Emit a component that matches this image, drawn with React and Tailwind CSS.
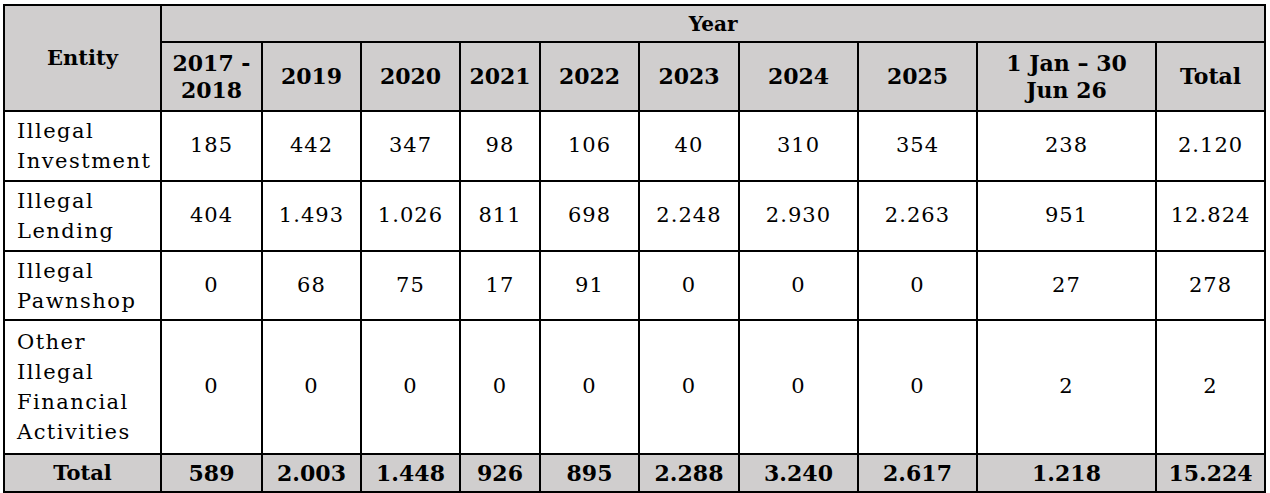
import React from "react";

const cols = [157, 101, 99, 99, 80, 99, 100, 119, 119, 179, 109];

const years = [
  ["2017 -", "2018"],
  ["2019"],
  ["2020"],
  ["2021"],
  ["2022"],
  ["2023"],
  ["2024"],
  ["2025"],
  ["1 Jan – 30", "Jun 26"],
  ["Total"],
];

const rows = [
  { name: ["Illegal", "Investment"], h: "h-[70px]", values: ["185", "442", "347", "98", "106", "40", "310", "354", "238", "2.120"] },
  { name: ["Illegal", "Lending"], h: "h-[70px]", values: ["404", "1.493", "1.026", "811", "698", "2.248", "2.930", "2.263", "951", "12.824"] },
  { name: ["Illegal", "Pawnshop"], h: "h-[69px]", values: ["0", "68", "75", "17", "91", "0", "0", "0", "27", "278"] },
  { name: ["Other", "Illegal", "Financial", "Activities"], h: "h-[134px]", values: ["0", "0", "0", "0", "0", "0", "0", "0", "2", "2"] },
];

const totals = ["589", "2.003", "1.448", "926", "895", "2.288", "3.240", "2.617", "1.218", "15.224"];

const cell = "border-2 border-black p-0";

export default function App() {
  return (
    <div className="w-[1270px] h-[493px] bg-white pt-[4px] pl-[3px] overflow-hidden" style={{ fontFamily: '"DejaVu Serif", "Liberation Serif", serif' }}>
      <table className="table-fixed border-collapse border-2 border-black text-black" style={{ width: 1263 }}>
        <colgroup>
          {cols.map((w, i) => (
            <col key={i} style={{ width: w }} />
          ))}
        </colgroup>
        <thead>
          <tr className="h-[37px] bg-[#d0cece]">
            <th rowSpan={2} className={`${cell} text-[21px] font-bold text-center align-middle`}>
              Entity
            </th>
            <th colSpan={10} className={`${cell} text-[20px] font-bold text-center`}>
              Year
            </th>
          </tr>
          <tr className="h-[69px] bg-[#d0cece]">
            {years.map((y, i) => (
              <th key={i} className={`${cell} text-[22px] font-bold text-center leading-[27px] ${i === 9 ? "text-[21px]" : ""}`}>
                {y.map((l, j) => (
                  <div key={j} className="whitespace-nowrap">{l}</div>
                ))}
              </th>
            ))}
          </tr>
        </thead>
        <tbody>
          {rows.map((r, i) => (
            <tr key={i} className={r.h}>
              <td className={`${cell} pl-[12px] text-left align-middle text-[21px] leading-[30px] tracking-[0.07em]`}>
                {r.name.map((l, j) => (
                  <div key={j} className="whitespace-nowrap">{l}</div>
                ))}
              </td>
              {r.values.map((v, j) => (
                <td key={j} className={`${cell} text-center align-middle text-[21px] tracking-[0.05em]`}>
                  {v}
                </td>
              ))}
            </tr>
          ))}
          <tr className="h-[38px] bg-[#d0cece]">
            <td className={`${cell} text-center font-bold text-[21px]`}>Total</td>
            {totals.map((v, j) => (
              <td key={j} className={`${cell} text-center font-bold text-[22px]`}>
                {v}
              </td>
            ))}
          </tr>
        </tbody>
      </table>
    </div>
  );
}
